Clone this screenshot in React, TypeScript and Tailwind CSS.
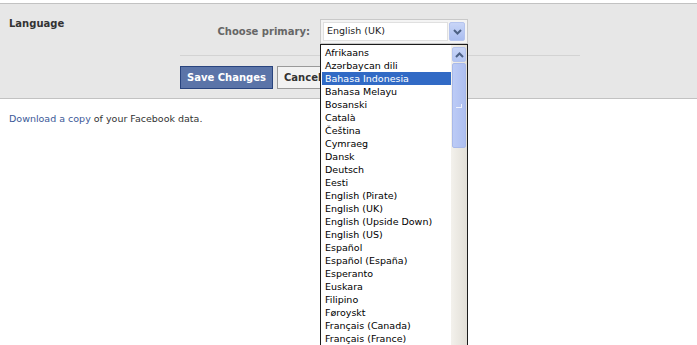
import React from "react";

const languages = [
  "Afrikaans",
  "Azərbaycan dili",
  "Bahasa Indonesia",
  "Bahasa Melayu",
  "Bosanski",
  "Català",
  "Čeština",
  "Cymraeg",
  "Dansk",
  "Deutsch",
  "Eesti",
  "English (Pirate)",
  "English (UK)",
  "English (Upside Down)",
  "English (US)",
  "Español",
  "Español (España)",
  "Esperanto",
  "Euskara",
  "Filipino",
  "Føroyskt",
  "Français (Canada)",
  "Français (France)",
];

function Chevron({ up }: { up?: boolean }) {
  return (
    <svg width="9" height="6" viewBox="0 0 9 6" className={up ? "rotate-180" : ""}>
      <path d="M1 1 L4.5 4.5 L8 1" fill="none" stroke="#4d6185" strokeWidth="2" />
    </svg>
  );
}

function LanguageList() {
  return (
    <div className="absolute left-[320px] top-[44px] w-[148px] h-[310px] border border-[#1c1c1c] bg-white flex overflow-hidden">
      <div className="flex-1 pt-[1px]">
        {languages.map((lang, i) => (
          <div
            key={lang}
            className={
              i === 2
                ? "h-[13px] leading-[13px] pl-[3px] ml-[1px] bg-[#316ac5] text-white whitespace-nowrap"
                : "h-[13px] leading-[13px] pl-[3px] ml-[1px] text-black whitespace-nowrap"
            }
          >
            {lang}
          </div>
        ))}
      </div>
      <div className="w-[16px] bg-gradient-to-r from-[#f3f1ec] to-[#e2dfd7] flex flex-col pt-[2px]">
        <div className="h-[15px] mx-[1px] rounded-[2px] border border-[#b5c4ee] bg-gradient-to-b from-[#c8d5f7] to-[#b3c5f3] flex items-center justify-center">
          <Chevron up />
        </div>
        <div className="h-[85px] mt-[1px] mx-[1px] rounded-[2px] border border-[#a8b9ea] bg-gradient-to-r from-[#bccbf6] to-[#aebff0] flex items-center justify-center">
          <div className="w-[6px] h-[4px] border-b border-r border-[#eef2fd]" />
        </div>
      </div>
    </div>
  );
}

export default function App() {
  return (
    <div
      className="relative w-[697px] h-[345px] overflow-hidden bg-white text-[9.5px]"
      style={{ fontFamily: "'DejaVu Sans', Tahoma, sans-serif" }}
    >
      <div className="h-[3px] bg-white" />
      <div className="flex border-t border-b border-[#c2c2c2] bg-[#e7e7e7] h-[96px] pb-[8px]">
        <div className="w-[180px] pl-[9px] pt-[12px] font-bold text-[10px] text-[#333]">Language</div>
        <div className="flex flex-col pt-[15px]">
          <div className="flex items-center">
            <div className="w-[140px] pr-[10px] text-right font-bold text-[10px] text-[#666]">
              Choose primary:
            </div>
            <div className="w-[148px] h-[25px] border border-[#c9c9c9] bg-[#f4f4f4] flex items-center p-[2px]">
              <div className="flex-1 h-full bg-white border border-[#e0e0e0] pl-[3px] flex items-center text-[#222]">
                English (UK)
              </div>
              <div className="w-[16px] h-[19px] ml-[1px] rounded-[2px] border border-[#b5c4ee] bg-gradient-to-b from-[#c8d5f7] to-[#aabdf0] flex items-center justify-center">
                <Chevron />
              </div>
            </div>
          </div>
          <div className="w-[400px] h-[1px] bg-[#d3d3d3] mt-[11px]" />
          <div className="flex gap-[4px] mt-[10px]">
            <button className="w-[93px] h-[23px] border border-[#29447e] bg-[#5b74a8] text-white font-bold text-[10px]">
              Save Changes
            </button>
            <button className="h-[23px] px-[6px] border border-[#999] bg-[#f2f2f2] text-[#333] font-bold text-[10px]">
              Cancel
            </button>
          </div>
        </div>
      </div>
      <div className="pl-[9px] pt-[13px] text-[#333]">
        <span className="text-[#3b5998]">Download a copy</span> of your Facebook data.
      </div>
      <LanguageList />
    </div>
  );
}
